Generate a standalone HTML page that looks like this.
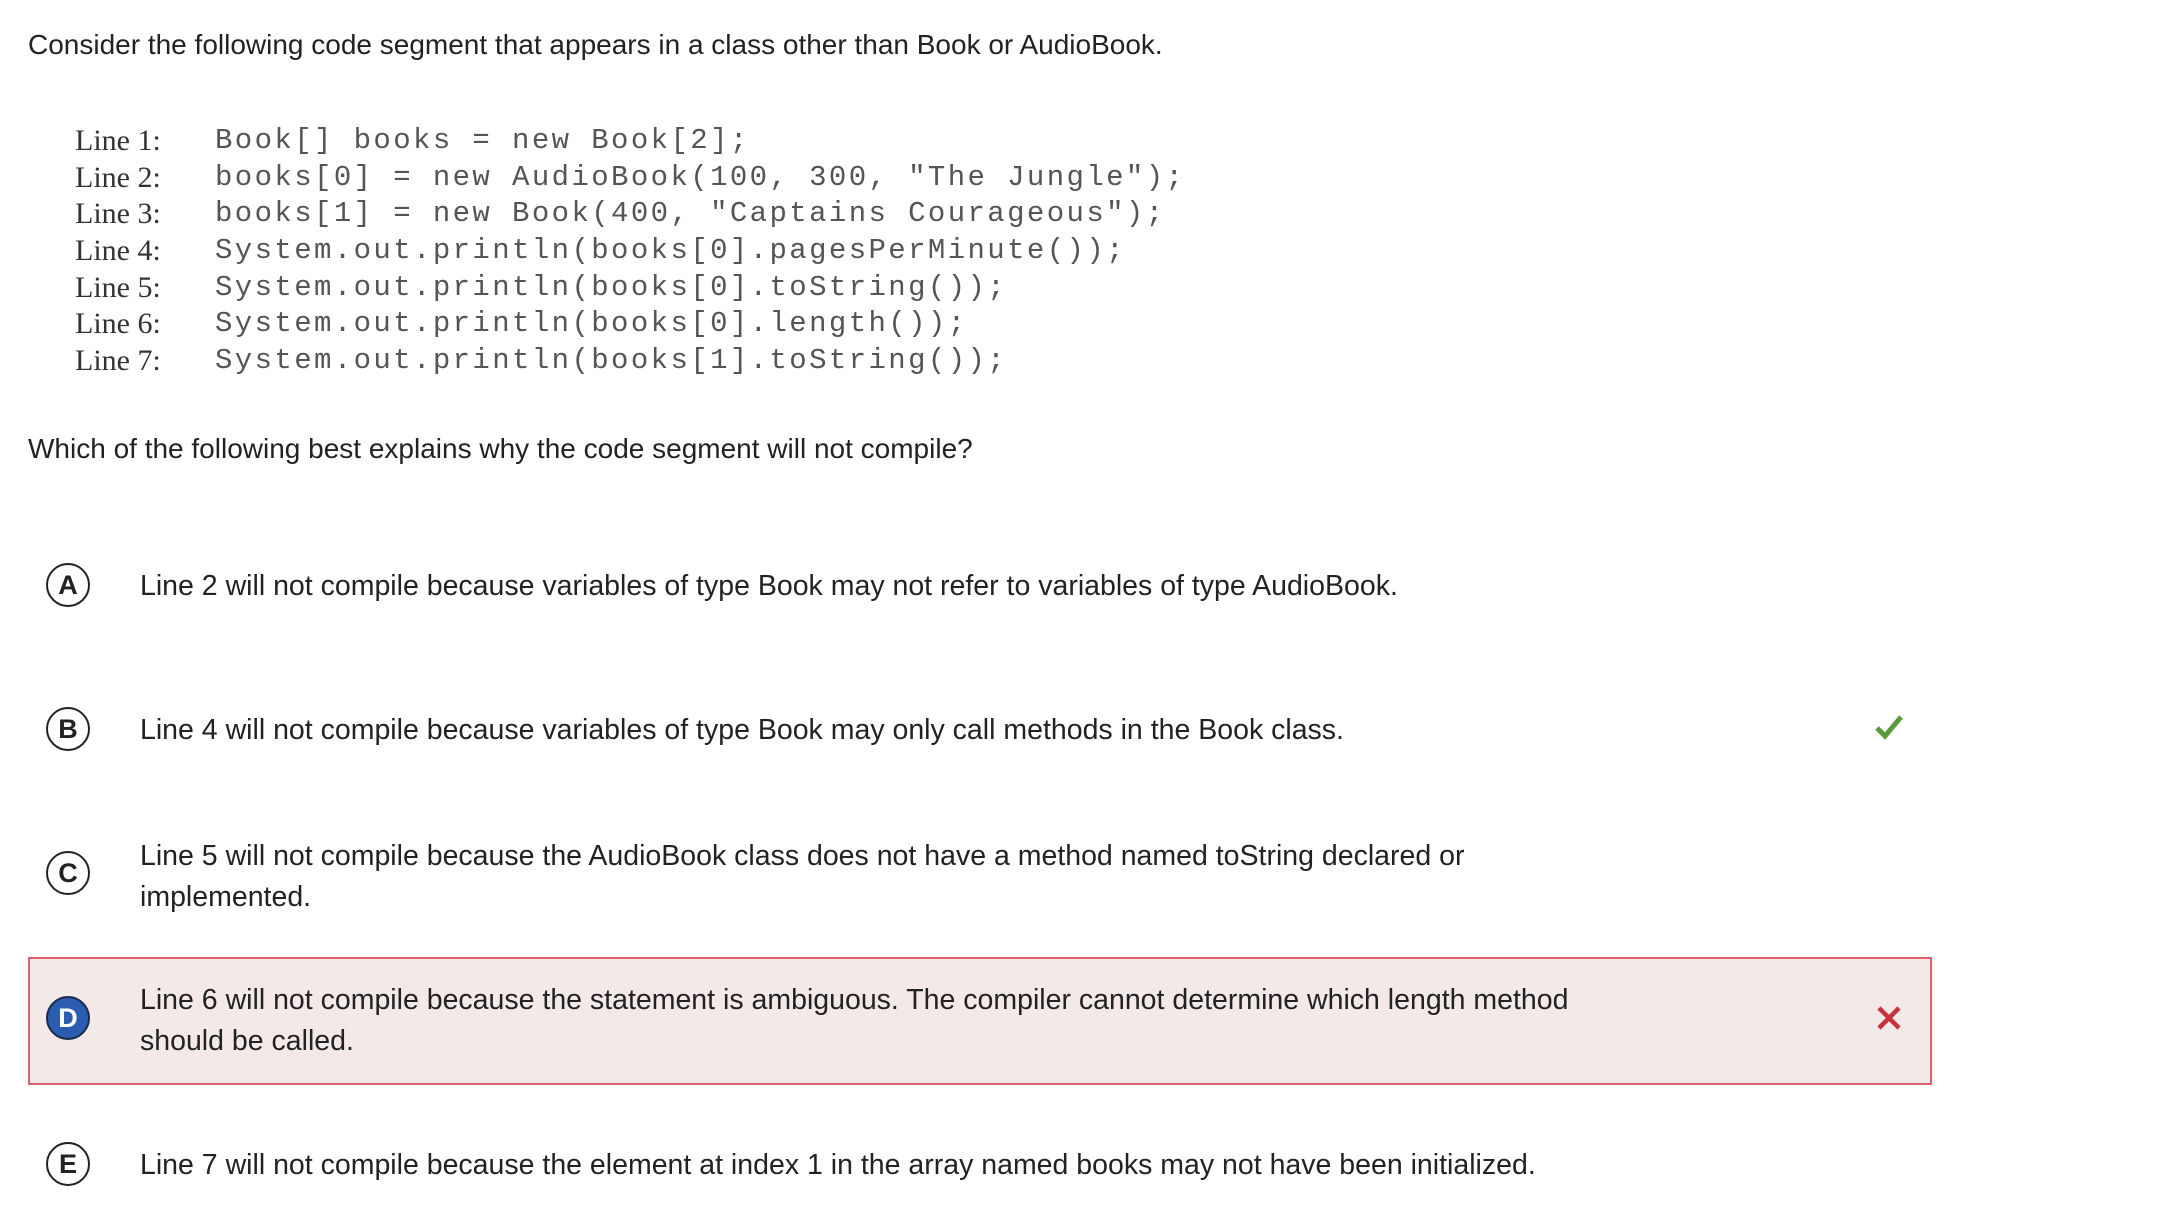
<!DOCTYPE html>
<html><head><meta charset="utf-8"><style>
body{margin:0;width:2166px;height:1228px;background:#fff;position:relative;overflow:hidden;font-family:"Liberation Sans",sans-serif;color:#222}
.a{position:absolute;white-space:nowrap}
.q{font-size:28px;left:28px}
.ln{font-family:"Liberation Serif",serif;font-size:30px;color:#333;left:75px}
.cd{font-family:"Liberation Mono",monospace;font-size:29px;color:#555;left:215px;letter-spacing:2.4px}
.op{font-size:28.5px;left:140px;line-height:41px}
.c{position:absolute;left:46px;width:40px;height:40px;border:2.5px solid #222;border-radius:50%;font-weight:bold;font-size:27px;text-align:center;line-height:40px;color:#222}
</style></head><body>
<div class="a q" style="top:29px">Consider the following code segment that appears in a class other than Book or AudioBook.</div>
<div class="a ln" style="top:124px">Line 1:</div><div class="a cd" style="top:124px">Book[] books = new Book[2];</div>
<div class="a ln" style="top:161px">Line 2:</div><div class="a cd" style="top:161px">books[0] = new AudioBook(100, 300, "The Jungle");</div>
<div class="a ln" style="top:197px">Line 3:</div><div class="a cd" style="top:197px">books[1] = new Book(400, "Captains Courageous");</div>
<div class="a ln" style="top:234px">Line 4:</div><div class="a cd" style="top:234px">System.out.println(books[0].pagesPerMinute());</div>
<div class="a ln" style="top:271px">Line 5:</div><div class="a cd" style="top:271px">System.out.println(books[0].toString());</div>
<div class="a ln" style="top:307px">Line 6:</div><div class="a cd" style="top:307px">System.out.println(books[0].length());</div>
<div class="a ln" style="top:344px">Line 7:</div><div class="a cd" style="top:344px">System.out.println(books[1].toString());</div>
<div class="a q" style="top:433px">Which of the following best explains why the code segment will not compile?</div>

<div class="c" style="top:563px">A</div>
<div class="a op" style="top:566px">Line 2 will not compile because variables of type Book may not refer to variables of type AudioBook.</div>

<div class="c" style="top:707px">B</div>
<div class="a op" style="top:710px">Line 4 will not compile because variables of type Book may only call methods in the Book class.</div>
<svg class="a" style="left:1874px;top:713px" width="30" height="28" viewBox="0 0 30 28"><path d="M3 15 L11 23 L27 4" fill="none" stroke="#5a9a3c" stroke-width="5"/></svg>

<div class="c" style="top:851px">C</div>
<div class="a op" style="top:836px">Line 5 will not compile because the AudioBook class does not have a method named toString declared or<br>implemented.</div>

<div class="a" style="left:28px;top:957px;width:1900px;height:124px;background:#f3e9e9;border:2px solid #d9626b"></div>
<div class="c" style="top:996px;background:#2a5db0;color:#fff;border-color:#1a2a4a">D</div>
<div class="a op" style="top:980px">Line 6 will not compile because the statement is ambiguous. The compiler cannot determine which length method<br>should be called.</div>
<svg class="a" style="left:1876px;top:1005px" width="26" height="26" viewBox="0 0 26 26"><path d="M3 3 L23 23 M23 3 L3 23" stroke="#c8323c" stroke-width="4.5"/></svg>

<div class="c" style="top:1142px">E</div>
<div class="a op" style="top:1145px">Line 7 will not compile because the element at index 1 in the array named books may not have been initialized.</div>
</body></html>
